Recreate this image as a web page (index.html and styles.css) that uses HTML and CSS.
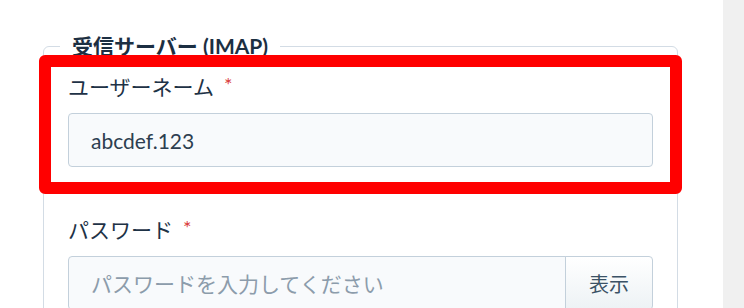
FILE: index.html
```html
<!DOCTYPE html>
<html lang="ja">
<head>
<meta charset="utf-8">
<link rel="stylesheet" href="styles.css">
</head>
<body>
<div class="page">
  <main class="main">
    <fieldset class="server">
      <legend class="server-title">受信サーバー (IMAP)</legend>
      <div class="field field-highlight">
        <label class="field-label">ユーザーネーム<span class="req">*</span></label>
        <input class="text-input" type="text" value="abcdef.123">
        <div class="highlight-box"></div>
      </div>
      <div class="field">
        <label class="field-label">パスワード<span class="req">*</span></label>
        <div class="input-group">
          <input class="text-input group-input" type="password" placeholder="パスワードを入力してください">
          <button class="show-btn" type="button">表示</button>
        </div>
      </div>
    </fieldset>
  </main>
  <aside class="side"></aside>
</div>
</body>
</html>
```
FILE: styles.css
```css
* { box-sizing: border-box; }
html, body { margin: 0; padding: 0; background: #ffffff; overflow: hidden; }
body {
  font-family: Lato, "Noto Sans CJK JP", sans-serif;
  color: #1e3246;
}
.page { display: flex; width: 744px; height: 308px; overflow: hidden; }
.main { width: 723px; height: 308px; overflow: hidden; }
.side { width: 21px; height: 308px; background: #f0f0f0; }

.server {
  margin: 34px 0 0 43px;
  width: 635px;
  padding: 0 24px 40px;
  border: 1px solid #d3dce5;
  border-radius: 6px;
  min-width: 0;
}
.server-title {
  margin-left: -8px;
  padding: 0 12px;
  font-size: 21px;
  line-height: 24px;
  font-weight: 700;
  color: #1c2f42;
}
.field { position: relative; margin-top: 14px; }
.field + .field { margin-top: 48px; }
.field-label {
  display: block;
  font-size: 21px;
  line-height: 30px;
  font-weight: 400;
  color: #1e3246;
  margin-bottom: 11px;
}
.req {
  color: #d9393b;
  font-size: 20px;
  margin-left: 10px;
  vertical-align: top;
  line-height: 24px;
}
.text-input {
  display: block;
  width: 100%;
  height: 54px;
  padding: 0 22px;
  border: 1px solid #c3d0db;
  border-radius: 4px;
  background: #f8fafc;
  font-family: Lato, "Noto Sans CJK JP", sans-serif;
  font-size: 21px;
  color: #2d3e50;
  outline: none;
}
.text-input::placeholder { color: #8c9cab; }
.input-group { display: flex; }
.group-input {
  flex: 1;
  border-radius: 4px 0 0 4px;
}
.show-btn {
  width: 88px;
  height: 54px;
  border: 1px solid #c3d0db;
  border-left: 1px solid #c3d0db;
  border-radius: 0 4px 4px 0;
  margin-left: -1px;
  background: linear-gradient(#ffffff, #edf2f5);
  font-family: Lato, "Noto Sans CJK JP", sans-serif;
  font-size: 20px;
  color: #3b5266;
  padding: 0;
}
.highlight-box {
  position: absolute;
  left: -29px;
  right: -29px;
  top: -17px;
  bottom: -27px;
  border: 12px solid #ff0000;
  border-radius: 6px;
  pointer-events: none;
}
```
